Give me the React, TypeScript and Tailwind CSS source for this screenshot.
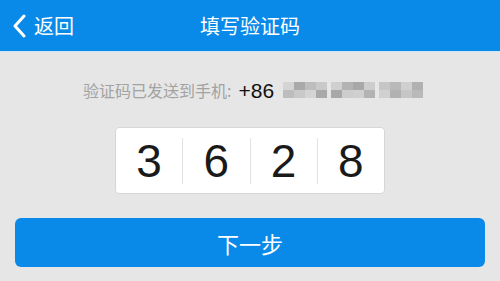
import React from 'react';

const digits = ['3', '6', '2', '8'];

// pixelated (masked) phone number blocks
const masked = [
  ['#d4d4d4', '#a9a9a9', '#bdbdbd', '#c9c9c9'],
  ['#cfcfcf', '#b3b3b3', '#a8a8a8', '#cdcdcd'],
  ['#c6c6c6', '#b9b9b9', '#d0d0d0', '#b1b1b1'],
];

export default function App() {
  return (
    <div className="w-[500px] h-[281px] bg-[#e6e6e6] flex flex-col overflow-hidden" style={{ fontFamily: '"Noto Sans CJK SC", "Liberation Sans", sans-serif' }}>
      <div className="relative h-[52px] bg-[#0a8ae8] flex items-center justify-center border-b border-[#cfe6f6]">
        <div className="absolute left-[12px] top-0 h-full flex items-center gap-[6px] text-white">
          <svg width="16" height="24" viewBox="0 0 16 24" fill="none">
            <path d="M12 2 L3 12 L12 22" stroke="white" strokeWidth="3" strokeLinecap="round" strokeLinejoin="round" />
          </svg>
          <span className="text-[20px] leading-none">返回</span>
        </div>
        <span className="text-white text-[20px] leading-none">填写验证码</span>
      </div>

      <div className="flex items-center mt-[28px] ml-[83px] h-[20px]">
        <span className="text-[#a2a2a2] text-[16px] leading-none">验证码已发送到手机:</span>
        <span className="ml-[7px] text-[#111] text-[21px] leading-none" style={{ fontFamily: '"Liberation Sans", sans-serif' }}>+86</span>
        <div className="ml-[9px] flex gap-[4px] blur-[0.6px]">
          {masked.map((grp, i) => (
            <div key={i} className="flex">
              {grp.map((c, j) => (
                <div key={j} className="flex flex-col">
                  <div className="w-[11px] h-[8px]" style={{ background: c }} />
                  <div className="w-[11px] h-[8px]" style={{ background: grp[(j + 2) % 4] }} />
                </div>
              ))}
            </div>
          ))}
        </div>
      </div>

      <div className="mt-[27px] mx-auto w-[270px] h-[67px] bg-white rounded-[4px] border border-[#d6d6d6] flex items-center">
        {digits.map((d, i) => (
          <div key={i} className={`flex-1 h-[46px] flex items-center justify-center ${i > 0 ? 'border-l border-[#e2e2e2]' : ''}`}>
            <span className="text-[46px] leading-none text-[#1a1a1a]" style={{ fontFamily: '"Liberation Sans", sans-serif' }}>{d}</span>
          </div>
        ))}
      </div>

      <button className="mt-[24px] mx-[15px] h-[49px] rounded-[6px] bg-[#0a8ae8] flex items-center justify-center text-white text-[22px] leading-none">
        下一步
      </button>
    </div>
  );
}
